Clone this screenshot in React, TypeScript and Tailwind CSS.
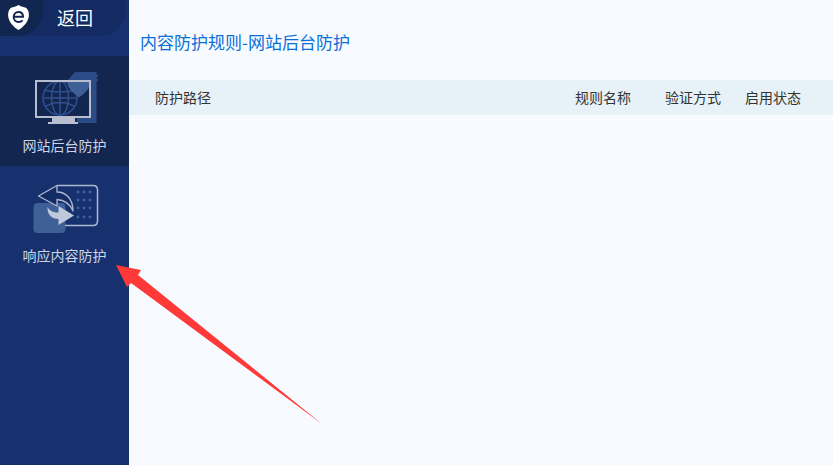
const font = { fontFamily: '"Noto Sans CJK SC", "Liberation Sans", sans-serif' };

function Logo() {
  return (
    <svg width="21" height="25" viewBox="0 0 21 25">
      <path d="M10.500 0 C13 1.500 15.500 2.200 18 2.800 C20.500 5 21.200 8 20.800 11.500 C20 17 15.500 22 10.500 25 C5.500 22 1 17 0.200 11.500 C-0.200 8 0.500 5 3 2.800 C5.500 2.200 8 1.500 10.500 0Z" fill="#ffffff" />
      <path d="M5.700 11.800 H15 C15 8.800 13.200 7 10.500 7 C7.700 7 5.700 9 5.700 12 C5.700 15 7.700 17 10.500 17 C12.300 17 13.600 16.400 14.600 15.300" fill="none" stroke="#12264f" strokeWidth="2" />
    </svg>
  );
}

function MonitorIcon() {
  return (
    <svg className="ml-[3px]" width="66" height="58" viewBox="33 66 66 58">
      <path d="M67 81 L75 72 H96.500 V75 H98 V77 H96.500 V79 H98 V81 H96.500 V123 H77 V118 H91 V81Z" fill="#2c4c88" />
      <g fill="none" stroke="#2f5090" strokeWidth="1.500">
        <circle cx="60" cy="98" r="17" />
        <ellipse cx="60" cy="98" rx="8.500" ry="17" />
        <path d="M60 81 V115 M44 90 C52 92.500 68 92.500 76 90 M43 98 H77 M45 107 C52 101 68 101 75 107" />
      </g>
      <path d="M68 80 H90 V86 C88 90 84 94 79 97.500 C74 94 70 90 68 86Z" fill="#3f6096" />
      <rect x="36" y="81" width="54" height="36" fill="none" stroke="#b8bdd0" strokeWidth="2" />
      <path d="M52 118 H75 V122 H78 V124 H48 V122 H52Z" fill="#b8bdd0" />
    </svg>
  );
}

function ReplyIcon() {
  const xs = [78, 84, 90];
  const ys = [192, 200, 208, 217];
  return (
    <svg className="ml-[3px]" width="66" height="52" viewBox="33 182 66 52">
      <rect x="33.500" y="203" width="32" height="30" rx="4" fill="#3f6096" />
      <path d="M57 185.500 H93 C96 185.500 97.500 187 97.500 190 V221 C97.500 224 96 225.500 93 225.500 H65" fill="none" stroke="#aeb7d0" strokeWidth="1.500" />
      <g fill="#44609e">
        {ys.map((y) => xs.map((x) => <circle key={`${x}-${y}`} cx={x} cy={y} r="1.400" />))}
      </g>
      <path d="M38.500 196 L57 185.500 V192 C66 192 73 199 73 211 C70 204 65 200 57 199.500 V206Z" fill="#142c66" stroke="#aeb7d0" strokeWidth="1.300" strokeLinejoin="round" />
      <path d="M47.500 207 C50 211 53 212.500 58.500 212.500 V206 L74 215.500 L58.500 225 V219 C52 219 47 215 47.500 207Z" fill="#c0c8dc" />
    </svg>
  );
}

function NavItem({ label, active, icon }: { label: string; active?: boolean; icon: React.ReactNode }) {
  return (
    <div className={`flex h-[110px] flex-col items-center ${active ? "bg-[#12264f]" : ""}`}>
      <div className="flex h-[68px] w-full items-end justify-center">{icon}</div>
      <div className="mt-[11px] text-[14px] leading-[20px] text-[#cdd5e6]">{label}</div>
    </div>
  );
}

export default function App() {
  return (
    <div className="relative flex h-[465px] w-[833px] overflow-hidden bg-[#f7fbff]" style={font}>
      <aside className="flex w-[129px] shrink-0 flex-col bg-[#17316f]">
        <div className="relative flex h-[36px] w-[125px] items-center rounded-br-[24px] bg-[#142a62]">
          <div className="flex h-[36px] w-[43px] items-center rounded-br-[26px] bg-[#11264f] pl-[8px] pb-[1px]">
            <Logo />
          </div>
          <span className="ml-[14px] -translate-y-[1px] text-[18px] leading-[24px] text-white">返回</span>
        </div>
        <div className="h-[20px]" />
        <NavItem label="网站后台防护" active icon={<MonitorIcon />} />
        <NavItem label="响应内容防护" icon={<ReplyIcon />} />
      </aside>
      <main className="flex-1">
        <div className="flex h-[80px] items-center pl-[11px] pt-[3px] text-[17px] text-[#0a6fd8]">内容防护规则-网站后台防护</div>
        <div className="flex h-[35px] items-center bg-[#e6f2f7] text-[14px] text-[#333333]">
          <span className="ml-[26px] flex-1">防护路径</span>
          <span className="w-[90px]">规则名称</span>
          <span className="w-[80px]">验证方式</span>
          <span className="w-[88px]">启用状态</span>
        </div>
      </main>
      <svg className="absolute left-0 top-0" width="833" height="465" viewBox="0 0 833 465">
        <path d="M116 265 L141 270 L138 275 L322 424 L131 283 L127 287Z" fill="#ff3838" />
      </svg>
    </div>
  );
}
